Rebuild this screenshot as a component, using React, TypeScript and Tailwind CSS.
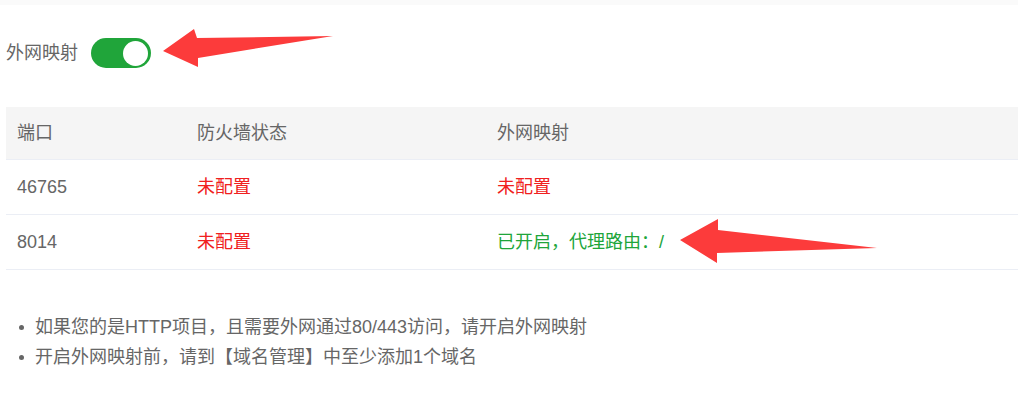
import React from "react";

const font = { fontFamily: '"Liberation Sans", "Noto Sans CJK SC", sans-serif' };

export default function App() {
  const rows = [
    { port: "46765", fw: "未配置", map: <span className="text-[#f02020]">未配置</span> },
    { port: "8014", fw: "未配置", map: <span className="text-[#20a53a]">已开启，代理路由：/</span> },
  ];
  return (
    <div className="relative w-[1018px] h-[416px] bg-white text-[18px] text-[#666] overflow-hidden" style={font}>
      <div className="h-[5px] bg-[#fafafa]" />
      <div className="pl-[6px]">
        <div className="mt-[33px] h-[30px] flex items-center">
          <span className="leading-[30px]">外网映射</span>
          <div className="ml-[13px] w-[60px] h-[30px] rounded-full bg-[#20a53a] flex items-center justify-end pr-[3px]">
            <div className="w-[25px] h-[25px] rounded-full bg-white" />
          </div>
        </div>
        <div className="mt-[39px]">
          <div className="flex h-[53px] items-center bg-[#f5f5f5] border-b border-[#ebeef5]">
            <div className="w-[180px] pl-[11px]">端口</div>
            <div className="w-[300px] pl-[11px]">防火墙状态</div>
            <div className="flex-1 pl-[11px]">外网映射</div>
          </div>
          {rows.map((r) => (
            <div key={r.port} className="flex h-[55px] items-center border-b border-[#ebeef5]">
              <div className="w-[180px] pl-[11px]">{r.port}</div>
              <div className="w-[300px] pl-[11px] text-[#f02020]">{r.fw}</div>
              <div className="flex-1 pl-[11px]">{r.map}</div>
            </div>
          ))}
        </div>
        <div className="mt-[42px]">
          {["如果您的是HTTP项目，且需要外网通过80/443访问，请开启外网映射", "开启外网映射前，请到【域名管理】中至少添加1个域名"].map((t) => (
            <div key={t} className="flex items-center h-[30px]">
              <span className="ml-[13px] mr-[11px] w-[5px] h-[5px] rounded-full bg-[#666]" />
              <span>{t}</span>
            </div>
          ))}
        </div>
      </div>
      <svg className="absolute left-0 top-0 pointer-events-none" width="1018" height="416" viewBox="0 0 1018 416">
        <polygon points="163,51 194,29 197,38 333,36 198,58 198,67" fill="#fc3b3b" />
        <polygon points="680,240 718,219 718,230 877,248 717,253 717,263" fill="#fc3b3b" />
      </svg>
    </div>
  );
}
